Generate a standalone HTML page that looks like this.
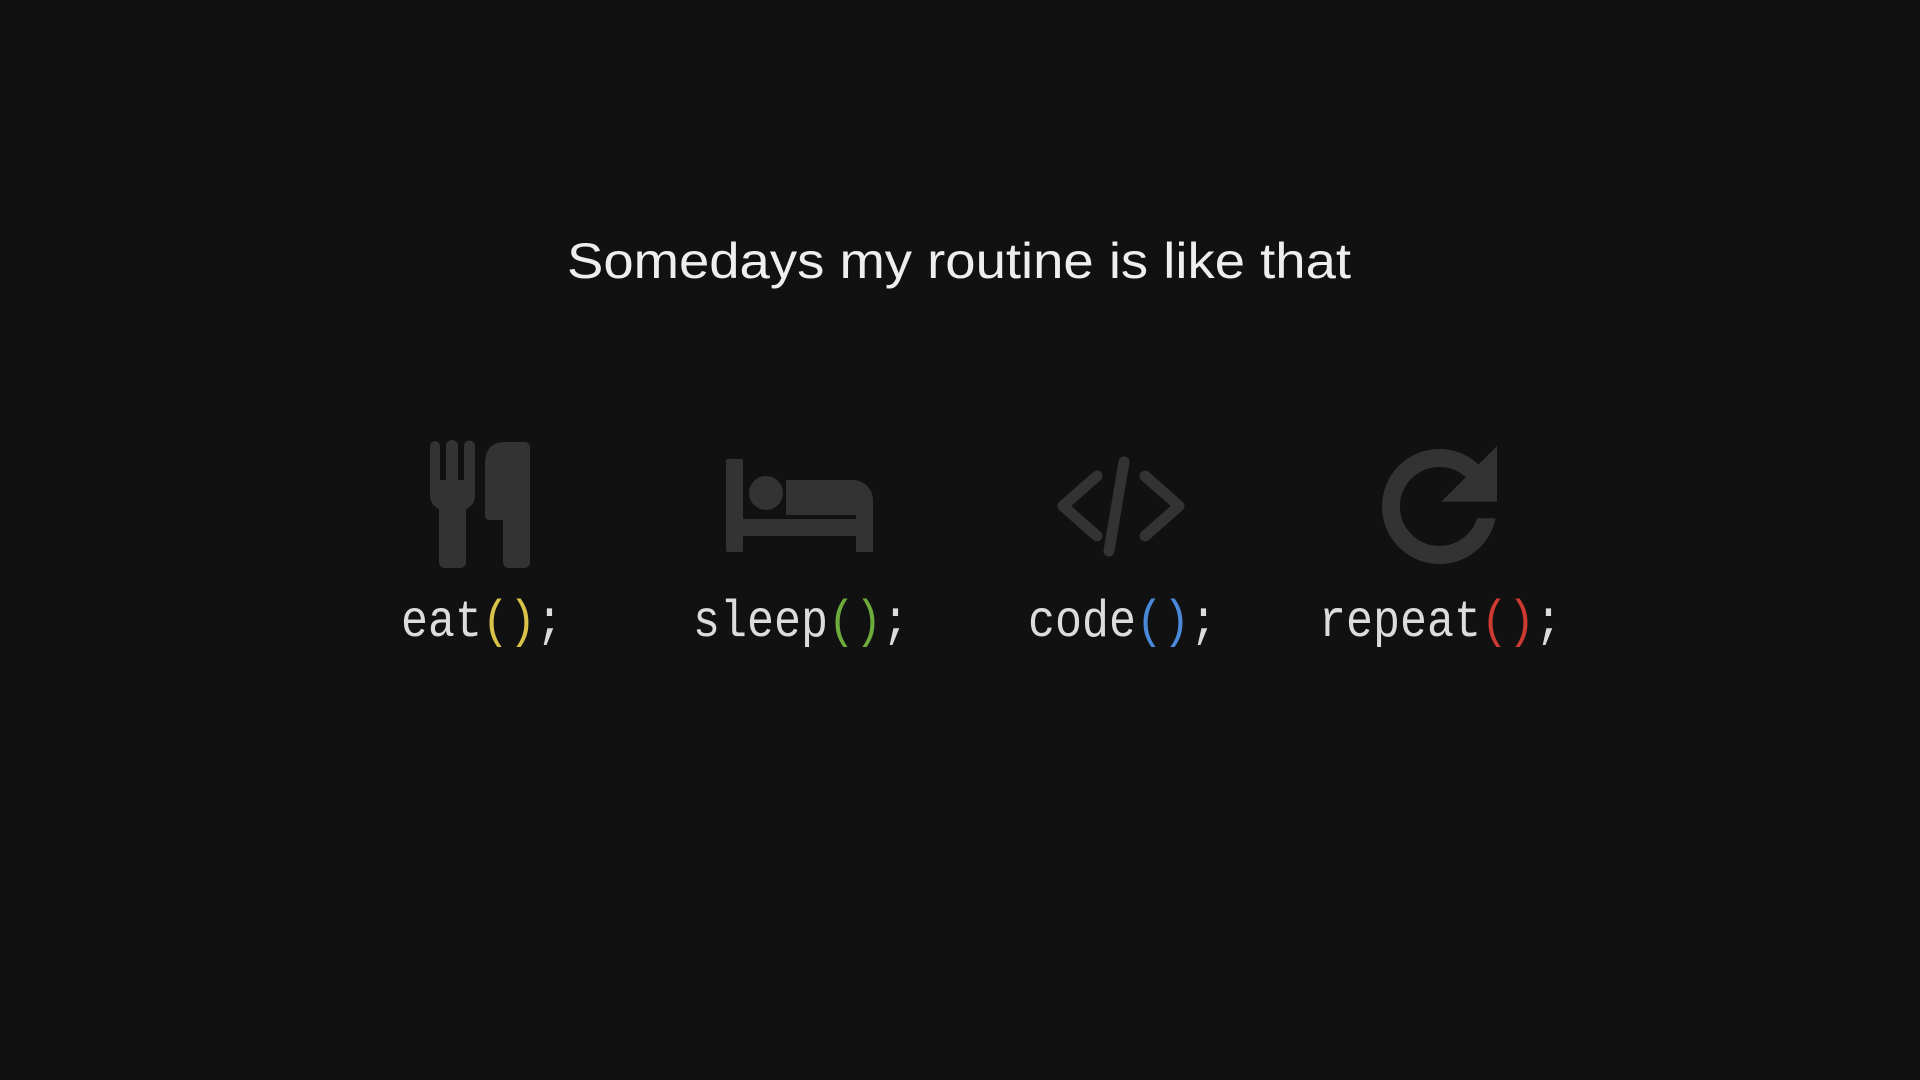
<!DOCTYPE html>
<html><head><meta charset="utf-8"><style>
html,body{margin:0;padding:0;background:#111111;width:1920px;height:1080px;overflow:hidden}
svg{display:block}
</style></head><body>
<svg width="1920" height="1080" viewBox="0 0 1920 1080" xmlns="http://www.w3.org/2000/svg">
<rect width="1920" height="1080" fill="#111111"/>
<text x="567" y="278" font-family="Liberation Sans, sans-serif" font-size="50" fill="#eeeeee" textLength="784" lengthAdjust="spacingAndGlyphs">Somedays my routine is like that</text>

<g fill="#333333">
  <!-- fork -->
  <path d="M430,446 a5,5 0 0 1 10,0 V480 H446 V446 a6,6 0 0 1 12,0 V480 H464 V446 a5.5,5.5 0 0 1 11,0 V495 q0,10 -9,14 V562 a6,6 0 0 1 -6,6 H445 a6,6 0 0 1 -6,-6 V509 q-9,-4 -9,-14 Z"/>
  <!-- knife -->
  <path d="M530,447 a5,5 0 0 0 -5,-5 H505 q-20,0 -20,22 V516 a4,4 0 0 0 4,4 H503 V562 a6,6 0 0 0 6,6 H524 a6,6 0 0 0 6,-6 Z"/>
  <!-- bed -->
  <rect x="726" y="459" width="17" height="93" rx="2"/>
  <rect x="726" y="519" width="147" height="17"/>
  <rect x="856" y="500" width="17" height="52"/>
  <circle cx="766" cy="493" r="17"/>
  <path d="M786,480 H853 a20,20 0 0 1 20,20 V515 H786 Z"/>
  <!-- repeat -->
  <g transform="translate(1356.3,423.3) scale(6.93)">
    <path stroke="#333333" stroke-width="0.6" d="M17.65 6.35C16.2 4.9 14.21 4 12 4c-4.42 0-7.99 3.580-7.99 8s3.57 8 7.99 8c3.73 0 6.84-2.55 7.730-6h-2.08c-.82 2.33-3.04 4-5.650 4-3.31 0-6-2.690-6-6s2.690-6 6-6c1.66 0 3.14.69 4.22 1.780L13 11h7V4l-2.35 2.35z"/>
  </g>
</g>
<!-- code -->
<g fill="none" stroke="#333333" stroke-width="11" stroke-linecap="round" stroke-linejoin="round">
  <polyline points="1097,476 1063,506 1097,536"/>
  <line x1="1109" y1="551" x2="1124" y2="462"/>
  <polyline points="1145,476 1179,506 1145,536"/>
</g>

<g font-family="Liberation Mono, DejaVu Sans Mono, monospace" font-size="45" fill="#dcdcdc">
  <g transform="translate(0,636) scale(1,1.15) translate(0,-636)">
    <text x="401" y="636">eat<tspan fill="#d9c24a">()</tspan>;</text>
    <text x="693" y="636">sleep<tspan fill="#6cab3c">()</tspan>;</text>
    <text x="1028" y="636">code<tspan fill="#4a88d9">()</tspan>;</text>
    <text x="1319" y="636">repeat<tspan fill="#cc3a30">()</tspan>;</text>
  </g>
</g>
</svg>
</body></html>
